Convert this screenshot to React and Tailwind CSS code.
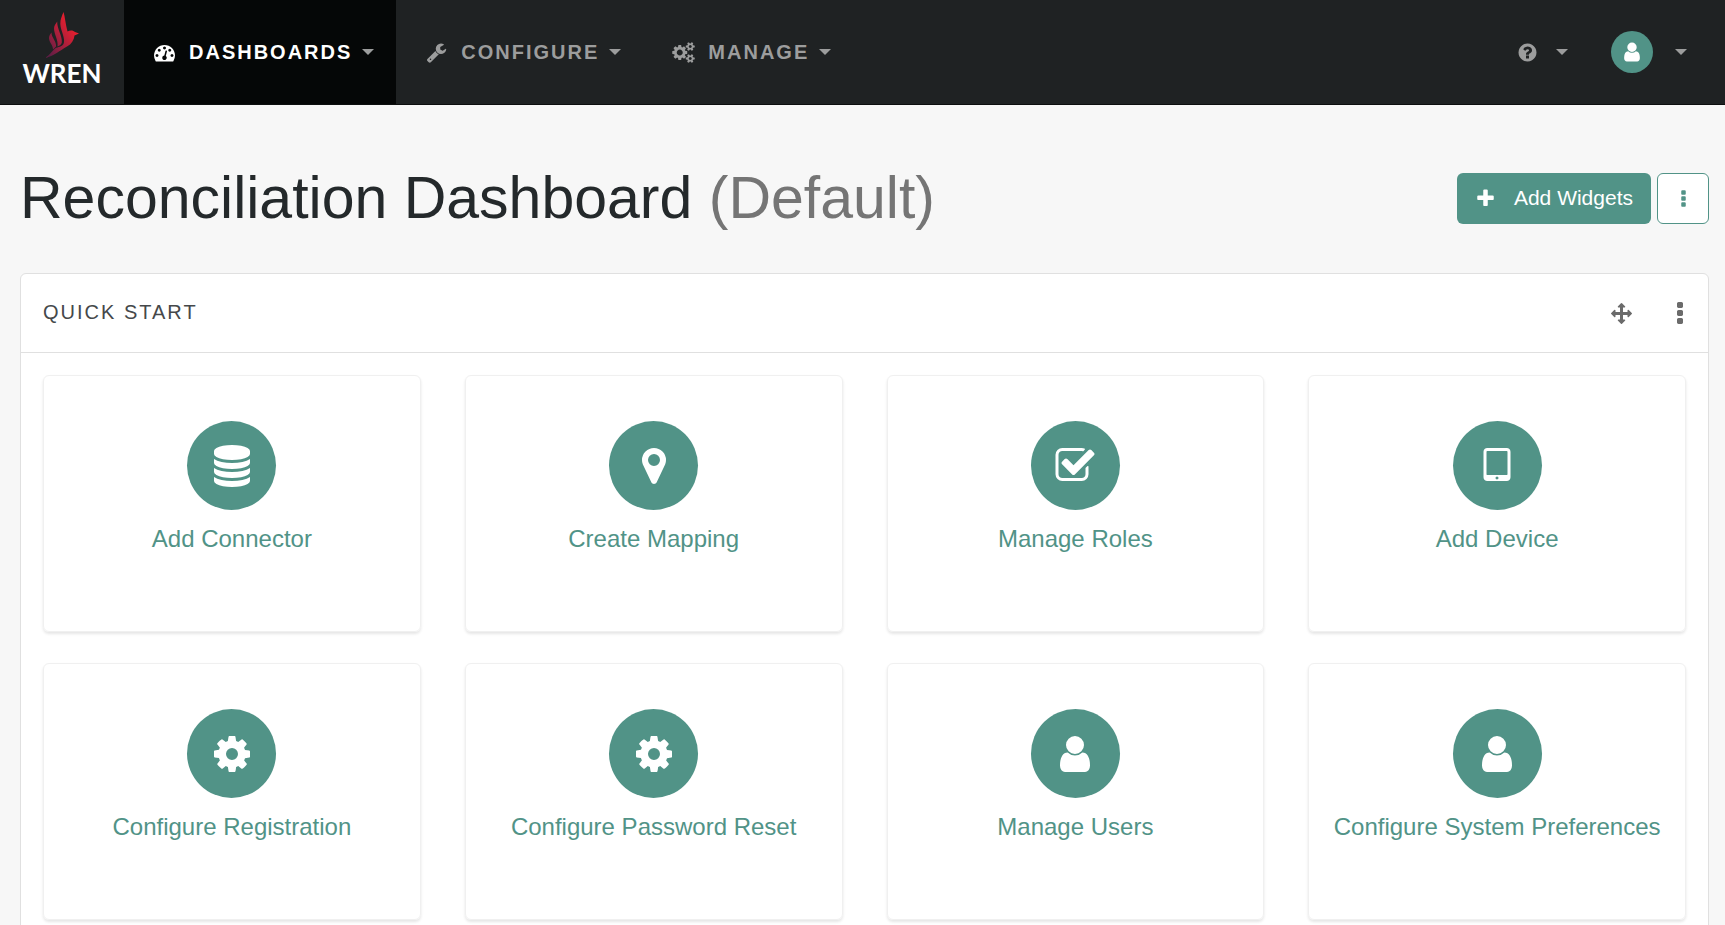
const ICONS = {
  database:
    "M896 768q237 0 443-43t325-127v170q0 69-103 128t-280 93.5-385 34.5-385-34.5-280-93.5-103-128v-170q119 84 325 127t443 43zm0 768q237 0 443-43t325-127v170q0 69-103 128t-280 93.5-385 34.5-385-34.5-280-93.5-103-128v-170q119 84 325 127t443 43zm0-384q237 0 443-43t325-127v170q0 69-103 128t-280 93.5-385 34.5-385-34.5-280-93.5-103-128v-170q119 84 325 127t443 43zm0-1152q208 0 385 34.5t280 93.5 103 128v128q0 69-103 128t-280 93.5-385 34.5-385-34.5-280-93.5-103-128v-128q0-69 103-128t280-93.5 385-34.5z",
  marker:
    "M1152 640q0-106-75-181t-181-75-181 75-75 181 75 181 181 75 181-75 75-181zm256 0q0 109-33 179l-364 774q-16 33-47.5 52t-67.5 19-67.5-19-46.5-52l-365-774q-33-70-33-179 0-212 150-362t362-150 362 150 150 362z",
  check:
    "M1472 930v318q0 119-84.5 203.5t-203.5 84.5h-832q-119 0-203.5-84.5t-84.5-203.5v-832q0-119 84.5-203.5t203.5-84.5h832q63 0 117 25 15 7 18 23 3 17-9 29l-49 49q-10 10-23 10-3 0-9-2-23-6-45-6h-832q-66 0-113 47t-47 113v832q0 66 47 113t113 47h832q66 0 113-47t47-113v-254q0-13 9-22l64-64q10-10 23-10 6 0 12 3 20 8 20 29zm231-489l-814 814q-24 24-57 24t-57-24l-430-430q-24-24-24-57t24-57l110-110q24-24 57-24t57 24l263 263 647-647q24-24 57-24t57 24l110 110q24 24 24 57t-24 57z",
  tablet:
    "M960 1408q0-26-19-45t-45-19-45 19-19 45 19 45 45 19 45-19 19-45zm384-160v-960q0-13-9.5-22.5t-22.5-9.5h-832q-13 0-22.5 9.5t-9.5 22.5v960q0 13 9.5 22.5t22.5 9.5h832q13 0 22.5-9.5t9.5-22.5zm128-960v1088q0 66-47 113t-113 47h-832q-66 0-113-47t-47-113v-1088q0-66 47-113t113-47h832q66 0 113 47t47 113z",
  gear:
    "M1152 896q0-106-75-181t-181-75-181 75-75 181 75 181 181 75 181-75 75-181zm512-109v222q0 12-8 23t-20 13l-185 28q-19 54-39 91 35 50 107 138 10 12 10 25t-9 23q-27 37-99 108t-94 71q-12 0-26-9l-138-108q-44 23-91 38-16 136-29 186-7 28-36 28h-222q-14 0-24.5-8.5t-11.5-21.5l-28-184q-49-16-90-37l-141 107q-10 9-25 9-14 0-25-11-126-114-165-168-7-10-7-23 0-12 8-23 15-21 51-66.5t54-70.5q-27-50-41-99l-183-27q-13-2-21-12.5t-8-23.5v-222q0-12 8-23t19-13l186-28q14-46 39-92-40-57-107-138-10-12-10-24 0-10 9-23 26-36 98.5-107.5t94.5-71.5q13 0 26 10l138 107q44-23 91-38 16-136 29-186 7-28 36-28h222q14 0 24.5 8.5t11.5 21.5l28 184q49 16 90 37l142-107q9-9 24-9 13 0 25 10 129 119 165 170 7 8 7 22 0 12-8 23-15 21-51 66.5t-54 70.5q26 50 41 98l183 28q13 2 21 12.5t8 23.5z",
  user:
    "M1536 1399q0 109-62.5 187t-150.5 78h-854q-88 0-150.5-78t-62.5-187q0-85 8.5-160.5t31.5-152 58.5-131 94-89 134.5-34.5q131 128 313 128t313-128q76 0 134.5 34.5t94 89 58.5 131 31.5 152 8.5 160.5zm-256-887q0 159-112.5 271.5t-271.5 112.5-271.5-112.5-112.5-271.5 112.5-271.5 271.5-112.5 271.5 112.5 112.5 271.5z",
  dashboard:
    "M384 1152q0-53-37.5-90.5t-90.5-37.5-90.5 37.5-37.5 90.5 37.5 90.5 90.5 37.5 90.5-37.5 37.5-90.5zm192-448q0-53-37.5-90.5t-90.5-37.5-90.5 37.5-37.5 90.5 37.5 90.5 90.5 37.5 90.5-37.5 37.5-90.5zm428 481l101-382q6-26-7.5-48.5t-38.5-29.5-48 6.5-30 39.5l-101 382q-60 5-107 43.5t-63 98.5q-20 77 20 146t117 89 146-20 89-117q16-60-6-117t-72-91zm660-33q0-53-37.5-90.5t-90.5-37.5-90.5 37.5-37.5 90.5 37.5 90.5 90.5 37.5 90.5-37.5 37.5-90.5zm-640-640q0-53-37.5-90.5t-90.5-37.5-90.5 37.5-37.5 90.5 37.5 90.5 90.5 37.5 90.5-37.5 37.5-90.5zm448 192q0-53-37.5-90.5t-90.5-37.5-90.5 37.5-37.5 90.5 37.5 90.5 90.5 37.5 90.5-37.5 37.5-90.5zm320 448q0 261-141 483-19 29-54 29h-1402q-35 0-54-29-141-221-141-483 0-182 71-348t191-286 286-191 348-71 348 71 286 191 191 286 71 348z",
  wrench:
    "M448 1472q0-26-19-45t-45-19-45 19-19 45 19 45 45 19 45-19 19-45zm644-420l-682 682q-37 37-90 37-52 0-91-37l-106-108q-38-36-38-90 0-53 38-91l681-681q39 98 114.5 173.5t173.5 114.5zm634-435q0 39-23 106-47 134-164.5 217.5t-258.5 83.5q-185 0-316.5-131.5t-131.5-316.5 131.5-316.5 316.5-131.5q58 0 121.5 16.5t107.5 46.5q16 11 16 28t-16 28l-293 169v224l193 107q5-3 79-48.5t135.5-81 70.5-35.5q15 0 23.5 10t8.5 25z",
  gears:
    "M832 896q0-106-75-181t-181-75-181 75-75 181 75 181 181 75 181-75 75-181zm768 512q0-52-38-90t-90-38-90 38-38 90q0 53 37.5 90.5t90.5 37.5 90.5-37.5 37.5-90.5zm0-1024q0-52-38-90t-90-38-90 38-38 90q0 53 37.5 90.5t90.5 37.5 90.5-37.5 37.5-90.5zm-384 421v185q0 10-7 19.5t-16 10.5l-155 24q-11 35-32 76 34 48 90 115 7 11 7 20 0 12-7 19-23 30-82.5 89.5t-78.5 59.5q-11 0-21-7l-115-90q-37 19-77 31-11 108-23 155-7 24-30 24h-186q-11 0-20-7.5t-10-17.5l-23-153q-34-10-75-31l-118 89q-7 7-20 7-11 0-21-8-144-133-144-160 0-9 7-19 10-14 41-53t47-61q-23-44-35-82l-152-24q-10-1-17-9.5t-7-19.5v-185q0-10 7-19.5t16-10.5l155-24q11-35 32-76-34-48-90-115-7-11-7-20 0-12 7-20 22-30 82-89t79-59q11 0 21 7l115 90q34-18 77-32 11-108 23-154 7-24 30-24h186q11 0 20 7.500t10 17.500l23 153q34 10 75 31l118-89q8-7 20-7 11 0 21 8 144 133 144 160 0 8-7 19-12 16-42 54t-45 60q23 48 34 82l152 23q10 2 17 10.500t7 19.500zm640 533v140q0 16-149 31-12 27-30 52 51 113 51 138 0 4-4 7-122 71-124 71-8 0-46-47t-52-68q-20 2-30 2t-30-2q-14 21-52 68t-46 47q-2 0-124-71-4-3-4-7 0-25 51-138-18-25-30-52-149-15-149-31v-140q0-16 149-31 13-29 30-52-51-113-51-138 0-4 4-7 4-2 35-20t59-34 30-16q8 0 46 46.500t52 67.500q20-2 30-2t30 2q51-71 92-112l6-2q4 0 124 70 4 3 4 7 0 25-51 138 17 23 30 52 149 15 149 31zm0-1024v140q0 16-149 31-12 27-30 52 51 113 51 138 0 4-4 7-122 71-124 71-8 0-46-47t-52-68q-20 2-30 2t-30-2q-14 21-52 68t-46 47q-2 0-124-71-4-3-4-7 0-25 51-138-18-25-30-52-149-15-149-31v-140q0-16 149-31 13-29 30-52-51-113-51-138 0-4 4-7 4-2 35-20t59-34 30-16q8 0 46 46.500t52 67.500q20-2 30-2t30 2q51-71 92-112l6-2q4 0 124 70 4 3 4 7 0 25-51 138 17 23 30 52 149 15 149 31z",
  help:
    "M1024 1376v-192q0-14-9-23t-23-9h-192q-14 0-23 9t-9 23v192q0 14 9 23t23 9h192q14 0 23-9t9-23zm256-672q0-88-55.5-163t-138.5-116-170-41q-243 0-371 213-15 24 8 42l132 100q7 6 19 6 16 0 25-12 53-68 86-92 34-24 86-24 48 0 85.5 26t37.5 59q0 38-20 61t-68 45q-63 28-115.5 86.5t-52.5 125.5v36q0 14 9 23t23 9h192q14 0 23-9t9-23q0-19 21.5-49.5t54.5-49.5q32-18 49-28.5t46-35 44.5-48 28-60.5 12.5-81zm384 192q0 209-103 385.5t-279.5 279.5-385.5 103-385.5-103-279.5-279.5-103-385.5 103-385.5 279.5-279.5 385.5-103 385.5 103 279.5 279.5 103 385.5z",
  move:
    "M1792 896q0 26-19 45l-256 256q-19 19-45 19t-45-19-19-45v-128h-384v384h128q26 0 45 19t19 45-19 45l-256 256q-19 19-45 19t-45-19l-256-256q-19-19-19-45t19-45 45-19h128v-384h-384v128q0 26-19 45t-45 19-45-19l-256-256q-19-19-19-45t19-45l256-256q19-19 45-19t45 19 19 45v128h384v-384h-128q-26 0-45-19t-19-45 19-45l256-256q19-19 45-19t45 19l256 256q19 19 19 45t-19 45-45 19h-128v384h384v-128q0-26 19-45t45-19 45 19l256 256q19 19 19 45z",
  plus:
    "M1600 736v192q0 40-28 68t-68 28h-416v416q0 40-28 68t-68 28h-192q-40 0-68-28t-28-68v-416h-416q-40 0-68-28t-28-68v-192q0-40 28-68t68-28h416v-416q0-40 28-68t68-28h192q40 0 68 28t28 68v416h416q40 0 68 28t28 68z",
  dots:
    "M1088 1312v192q0 40-28 68t-68 28h-192q-40 0-68-28t-28-68v-192q0-40 28-68t68-28h192q40 0 68 28t28 68zm0-512v192q0 40-28 68t-68 28h-192q-40 0-68-28t-28-68v-192q0-40 28-68t68-28h192q40 0 68 28t28 68zm0-512v192q0 40-28 68t-68 28h-192q-40 0-68-28t-28-68v-192q0-40 28-68t68-28h192q40 0 68 28t28 68z",
};

function Icon({ name, className }) {
  return (
    <svg viewBox="0 0 1792 1792" className={`shrink-0 overflow-visible fill-current ${className}`} aria-hidden="true">
      <path d={ICONS[name]} />
    </svg>
  );
}

function Caret() {
  return (
    <svg viewBox="0 0 12 6" className="h-[6px] w-[12px] shrink-0 fill-[#9c9d9d]" aria-hidden="true">
      <path d="M0 0h12L6 6z" />
    </svg>
  );
}

function Logo() {
  return (
    <a href="#home" aria-label="Wren home" className="flex w-[124px] flex-col items-center pt-[12px]">
      <svg viewBox="0 0 34 46" className="h-[46px] w-[34px]" aria-hidden="true">
        <defs>
          <linearGradient id="plume" gradientUnits="userSpaceOnUse" x1="2" y1="40" x2="32" y2="20">
            <stop offset="0" stopColor="#5f1d45" />
            <stop offset="0.5" stopColor="#a81f3c" />
            <stop offset="1" stopColor="#ea1f2d" />
          </linearGradient>
        </defs>
        <g fill="url(#plume)">
          <path d="M18.500 0C20 5 20.500 12 22.500 19.500 25 17.800 28.500 18.300 30 20l4 1.600-4.500 1.800C29 28 26.500 32 22 34.500 15 38.500 9 44 0 46c4.500-3 7-6.500 10-9.500 3.500-2 6.500-1.500 8.500-4.500 2.500-5-3-13.500-3.200-20C15.200 7 17 4 18.500 0z" />
          <path d="M12.200 9.500c-.4 7 5.300 14.500 4.600 21-.3 2-2 3.300-4.300 4C13.500 28 9 22 9 16.500c0-3 1.800-4.500 3.200-7z" />
          <path d="M6.500 20.500c-.3 4.500 5 9 4.600 14L8 37.500C8 33 4 30.500 4 26c0-2.200 1.300-3.800 2.500-5.500z" />
        </g>
      </svg>
      <span className="mt-[1px] font-['Lato','Liberation_Sans',sans-serif] text-[26px] leading-[28px] font-bold text-white">
        WREN
      </span>
    </a>
  );
}

const NAV = [
  { label: "Dashboards", icon: "dashboard", active: true },
  { label: "Configure", icon: "wrench" },
  { label: "Manage", icon: "gears" },
];

const CARDS = [
  { label: "Add Connector", icon: "database" },
  { label: "Create Mapping", icon: "marker" },
  { label: "Manage Roles", icon: "check" },
  { label: "Add Device", icon: "tablet" },
  { label: "Configure Registration", icon: "gear" },
  { label: "Configure Password Reset", icon: "gear" },
  { label: "Manage Users", icon: "user" },
  { label: "Configure System Preferences", icon: "user" },
];

export default function App() {
  return (
    <div className="min-h-screen bg-[#f7f7f7] font-['Liberation_Sans',Arial,sans-serif] text-[21px]">
      <header className="flex h-[105px] border-b border-[#0d0f0f] bg-[#1f2223]">
        <Logo />
        <nav className="flex">
          {NAV.map((item) => (
            <button
              key={item.label}
              type="button"
              className={`flex items-center pr-[22px] pl-[29px] text-[20px] font-bold tracking-[2px] uppercase ${
                item.active ? "bg-[#050707] text-white" : "text-[#9c9d9d]"
              }`}
            >
              <span className="mr-[14px] flex w-[22px] justify-center">
                <Icon name={item.icon} className="size-[21px]" />
              </span>
              <span className="mr-[10px]">{item.label}</span>
              <Caret />
            </button>
          ))}
        </nav>
        <div className="ml-auto flex items-center pr-[38px] text-[#9c9d9d]">
          <button type="button" aria-label="Help" className="mr-[43px] flex items-center gap-[18px]">
            <Icon name="help" className="size-[21px]" />
            <Caret />
          </button>
          <button type="button" aria-label="Account" className="flex items-center gap-[22px]">
            <span className="flex size-[42px] items-center justify-center rounded-full bg-[#519387] text-white">
              <Icon name="user" className="size-[22px]" />
            </span>
            <Caret />
          </button>
        </div>
      </header>

      <main className="pr-[16px] pl-[20px]">
        <div className="flex items-center justify-between pt-[56px] pb-[38px]">
          <h1 className="text-[59px] leading-[74px] text-[#24292b]">
            Reconciliation Dashboard <span className="text-[#757575]">(Default)</span>
          </h1>
          <div className="flex gap-[6px]">
            <button type="button" className="flex h-[51px] items-center rounded-[6px] bg-[#519387] px-[18px] text-white">
              <Icon name="plus" className="mr-[18px] size-[21px]" />
              Add Widgets
            </button>
            <button
              type="button"
              aria-label="Dashboard options"
              className="flex h-[51px] w-[52px] items-center justify-center rounded-[6px] border border-[#519387] bg-white text-[#519387]"
            >
              <Icon name="dots" className="size-[21px]" />
            </button>
          </div>
        </div>

        <section className="rounded-[6px] border border-[#e0e0e0] bg-white">
          <div className="flex h-[79px] items-center justify-between border-b border-[#e0e0e0] pr-[14px] pl-[22px]">
            <h2 className="pb-[3px] text-[20px] tracking-[2px] text-[#45484a] uppercase">Quick Start</h2>
            <div className="flex items-center gap-[34px] text-[#6b6b6b]">
              <button type="button" aria-label="Move widget">
                <Icon name="move" className="size-[21px]" />
              </button>
              <button type="button" aria-label="Widget options">
                <Icon name="dots" className="size-[28px]" />
              </button>
            </div>
          </div>
          <div className="grid grid-cols-4 gap-x-[44px] gap-y-[31px] px-[22px] pt-[22px] pb-[31px]">
            {CARDS.map((card) => (
              <a
                key={card.label}
                href="#quick-start"
                className="flex h-[257px] flex-col items-center rounded-[6px] border border-[#f0f0f0] pt-[45px] text-[#519387] shadow-[0_2px_3px_rgba(0,0,0,0.10)]"
              >
                <span className="flex size-[89px] items-center justify-center rounded-full bg-[#519387] text-white">
                  <Icon name={card.icon} className="size-[42px]" />
                </span>
                <span className="mt-[12px] text-[24px] leading-[34px]">{card.label}</span>
              </a>
            ))}
          </div>
        </section>
      </main>
    </div>
  );
}
